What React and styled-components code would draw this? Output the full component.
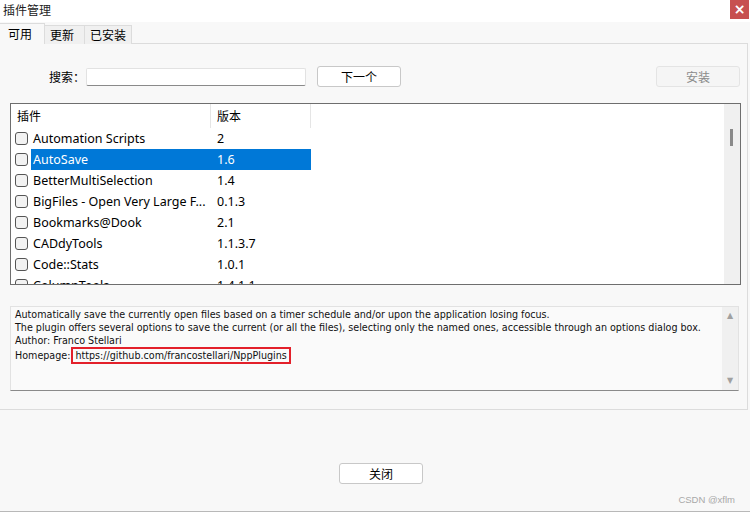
import React from "react";
import styled, { createGlobalStyle } from "styled-components";

const Global = createGlobalStyle`
  html, body { margin: 0; padding: 0; background: #f8f8f8; }
  body { font-family: "Noto Sans", "Noto Sans CJK SC", sans-serif; color: #000; }
`;

const plugins = [
  { name: "Automation Scripts", ver: "2" },
  { name: "AutoSave", ver: "1.6", selected: true },
  { name: "BetterMultiSelection", ver: "1.4" },
  { name: "BigFiles - Open Very Large F...", ver: "0.1.3" },
  { name: "Bookmarks@Dook", ver: "2.1" },
  { name: "CADdyTools", ver: "1.1.3.7" },
  { name: "Code::Stats", ver: "1.0.1" },
  { name: "ColumnTools", ver: "1.4.1.1" },
];

const App = () => {
  return (
    <Window>
      <Global />
      <TitleBar>
        <Title>插件管理</Title>
        <CloseBtn>×</CloseBtn>
      </TitleBar>
      <Tabs>
        <Tab active>可用</Tab>
        <Tab>更新</Tab>
        <Tab>已安装</Tab>
      </Tabs>
      <Panel>
        <SearchRow>
          <Label>搜索：</Label>
          <Input />
          <Button>下一个</Button>
          <span />
          <Button disabled>安装</Button>
        </SearchRow>
        <List>
          <ListBody>
            <Header>
              <HeadCell w={200}>插件</HeadCell>
              <HeadCell w={100}>版本</HeadCell>
            </Header>
            {plugins.map((p) => (
              <Row key={p.name}>
                <Check />
                <NameCell selected={p.selected}>
                  <span>{p.name}</span>
                  <span>{p.ver}</span>
                </NameCell>
              </Row>
            ))}
          </ListBody>
          <VScroll>
            <Thumb />
          </VScroll>
        </List>
        <Desc>
          <DescText>
            Automatically save the currently open files based on a timer schedule and/or upon the application losing focus.
            <br />
            The plugin offers several options to save the current (or all the files), selecting only the named ones, accessible through an options dialog box.
            <br />
            Author: Franco Stellari
            <br />
            Homepage: <Link>https://github.com/francostellari/NppPlugins</Link>
          </DescText>
          <DescScroll>
            <Arrow>▲</Arrow>
            <Arrow>▼</Arrow>
          </DescScroll>
        </Desc>
      </Panel>
      <Footer>
        <Button>关闭</Button>
      </Footer>
      <Watermark>CSDN @xflm</Watermark>
    </Window>
  );
};

export default App;

const Window = styled.div`
  width: 750px;
  height: 512px;
  box-sizing: border-box;
  border-bottom: 1px solid #b8b8b8;
  background: #f8f8f8;
  display: flex;
  flex-direction: column;
  position: relative;
  overflow: hidden;
`;

const TitleBar = styled.div`
  height: 22px;
  background: #fff;
  display: flex;
  justify-content: space-between;
  align-items: flex-start;
`;

const Title = styled.div`
  font-family: "Noto Sans CJK SC", sans-serif;
  font-size: 12px;
  line-height: 20px;
  padding-left: 3px;
  color: #222;
`;

const CloseBtn = styled.div`
  width: 19px;
  height: 19px;
  margin-right: 1px;
  background: #c75050;
  color: #fff;
  font-family: "DejaVu Sans", sans-serif;
  font-weight: bold;
  font-size: 14px;
  line-height: 18px;
  text-align: center;
`;

const Tabs = styled.div`
  display: flex;
  align-items: flex-end;
  height: 21px;
  padding-top: 1px;
  position: relative;
  z-index: 1;
`;

const Tab = styled.div`
  font-family: "Noto Sans CJK SC", sans-serif;
  font-size: 12px;
  box-sizing: border-box;
  height: ${(p) => (p.active ? "21px" : "19px")};
  line-height: ${(p) => (p.active ? "19px" : "18px")};
  padding: 0 ${(p) => (p.active ? "8px" : "5px")};
  border: 1px solid #dcdcdc;
  border-bottom: ${(p) => (p.active ? "1px solid #f8f8f8" : "none")};
  border-left: ${(p) => (p.active ? "none" : "1px solid #dcdcdc")};
  background: ${(p) => (p.active ? "#f8f8f8" : "#f0f0f0")};
  margin-left: ${(p) => (p.active ? "0" : "-1px")};
  width: ${(p) => (p.active ? "45px" : "auto")};
  &:nth-child(2) { width: 41px; }
  &:nth-child(3) { width: 48px; }
`;

const Panel = styled.div`
  width: 748px;
  height: 367px;
  margin-top: -1px;
  box-sizing: border-box;
  border: 1px solid #dcdcdc;
  border-left: none;
  padding: 22px 7px 0 10px;
  display: flex;
  flex-direction: column;
`;

const SearchRow = styled.div`
  display: grid;
  grid-template-columns: 76px 220px 84px 1fr 84px;
  align-items: center;
  column-gap: 0;
  height: 21px;
  & > :nth-child(3) { margin-left: 11px; }
`;

const Label = styled.div`
  font-family: "Noto Sans CJK SC", sans-serif;
  font-size: 12px;
  text-align: right;
  padding-right: 1px;
`;

const Input = styled.div`
  height: 18px;
  box-sizing: border-box;
  background: #fff;
  border: 1px solid #e2e2e2;
  border-bottom: 1px solid #8a8a8a;
  border-radius: 2px;
`;

const Button = styled.div`
  width: 84px;
  height: 21px;
  box-sizing: border-box;
  border: 1px solid ${(p) => (p.disabled ? "#e4e4e4" : "#c8c8c8")};
  border-radius: 3px;
  background: ${(p) => (p.disabled ? "#f5f5f5" : "#fff")};
  color: ${(p) => (p.disabled ? "#8a8a8a" : "#000")};
  font-family: "Noto Sans CJK SC", sans-serif;
  font-size: 12px;
  line-height: 19px;
  text-align: center;
`;

const List = styled.div`
  margin-top: 16px;
  width: 731px;
  height: 182px;
  box-sizing: border-box;
  border: 1px solid #6e6e6e;
  background: #fff;
  display: flex;
  overflow: hidden;
`;

const ListBody = styled.div`
  flex: 1;
  overflow: hidden;
`;

const Header = styled.div`
  display: flex;
  height: 24px;
`;

const HeadCell = styled.div`
  width: ${(p) => p.w}px;
  box-sizing: border-box;
  border-right: 1px solid #e5e5e5;
  padding-left: 6px;
  font-family: "Noto Sans CJK SC", sans-serif;
  font-size: 12px;
  line-height: 23px;
`;

const Row = styled.div`
  display: flex;
  align-items: center;
  height: 21px;
`;

const Check = styled.div`
  width: 13px;
  height: 13px;
  box-sizing: border-box;
  margin: 0 3px 0 4px;
  border: 1px solid #555;
  border-radius: 3px;
  background: #f2f2f2;
`;

const NameCell = styled.div`
  width: 280px;
  height: 21px;
  display: grid;
  grid-template-columns: 184px 1fr;
  align-items: center;
  padding-left: 2px;
  box-sizing: border-box;
  background: ${(p) => (p.selected ? "#0078d7" : "transparent")};
  color: ${(p) => (p.selected ? "#fff" : "#000")};
  font-family: "Noto Sans", sans-serif;
  font-size: 12.5px;
  white-space: nowrap;
  overflow: hidden;
`;

const VScroll = styled.div`
  width: 16px;
  background: #f0f0f0;
  position: relative;
`;

const Thumb = styled.div`
  position: absolute;
  left: 6px;
  top: 25px;
  width: 3px;
  height: 17px;
  background: #8a8a8a;
`;

const Desc = styled.div`
  margin-top: 21px;
  width: 729px;
  height: 85px;
  box-sizing: border-box;
  border: 1px solid #e2e2e2;
  border-bottom: 1px solid #8a8a8a;
  background: #fafafa;
  display: flex;
`;

const DescText = styled.div`
  flex: 1;
  padding: 2px 4px;
  font-family: "DejaVu Sans Condensed", "DejaVu Sans", sans-serif;
  font-size: 10.65px;
  line-height: 12.8px;
  color: #111;
  white-space: nowrap;
`;

const Link = styled.span`
  display: inline-block;
  margin-left: -2px;
  padding: 0 2px;
  border: 2px solid #e3202a;
  line-height: 13px;
`;

const DescScroll = styled.div`
  width: 16px;
  background: #f0f0f0;
  display: flex;
  flex-direction: column;
  justify-content: space-between;
  align-items: center;
  padding: 3px 0;
`;

const Arrow = styled.div`
  color: #a0a0a0;
  font-size: 8px;
  line-height: 12px;
  font-family: "DejaVu Sans", sans-serif;
`;

const Footer = styled.div`
  display: flex;
  padding: 53px 0 0 339px;
`;

const Watermark = styled.div`
  position: absolute;
  right: 15px;
  bottom: 6px;
  color: #a8a8a8;
  font-family: "Liberation Sans", sans-serif;
  font-size: 9.5px;
`;
